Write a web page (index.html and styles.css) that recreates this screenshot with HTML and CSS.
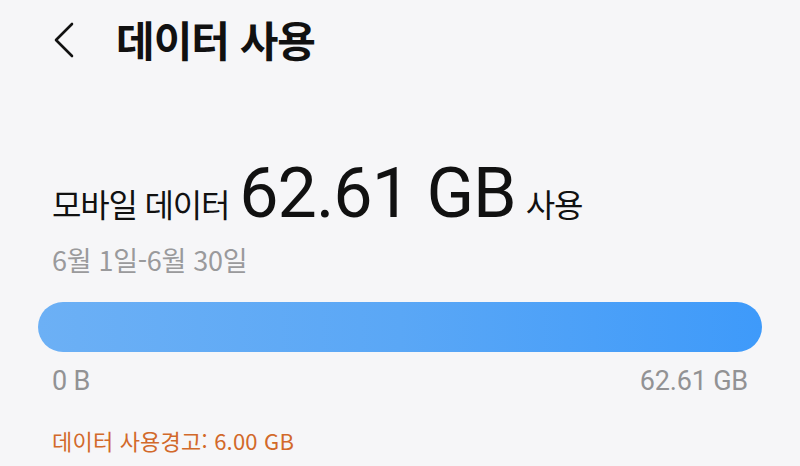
FILE: index.html
```html
<!DOCTYPE html>
<html lang="ko">
<head>
<meta charset="utf-8">
<link rel="stylesheet" href="styles.css">
</head>
<body>
<div class="page">
  <header class="topbar">
    <svg class="back" width="24" height="36" viewBox="0 0 24 36" aria-hidden="true">
      <path d="M20 2 L4 18 L20 34" fill="none" stroke="#111" stroke-width="2.6" stroke-linecap="round" stroke-linejoin="round"/>
    </svg>
    <h1 class="title">데이터 사용</h1>
  </header>
  <section class="summary">
    <div class="usage">
      <span class="label">모바일 데이터</span>
      <span class="amount">62.61 GB</span>
      <span class="label small">사용</span>
    </div>
    <div class="period">6월 1일-6월 30일</div>
  </section>
  <div class="bar"></div>
  <div class="scale">
    <span>0 B</span>
    <span>62.61 GB</span>
  </div>
  <div class="warning">데이터 사용경고: 6.00 GB</div>
</div>
</body>
</html>
```
FILE: styles.css
```css
html, body {
  margin: 0;
  padding: 0;
  background: #f6f6f8;
}
body {
  font-family: "Noto Sans CJK KR", Roboto, sans-serif;
  color: #111;
  width: 800px;
  height: 466px;
  overflow: hidden;
}
.page {
  display: flex;
  flex-direction: column;
}
.topbar {
  display: flex;
  align-items: center;
  height: 78px;
  padding-left: 52px;
  gap: 40px;
}
.back {
  display: block;
  margin-top: 2px;
}
.title {
  margin: 0;
  font-size: 42px;
  font-weight: 700;
  letter-spacing: -1px;
  line-height: 1;
}
.summary {
  padding-left: 52px;
  margin-top: 80px;
}
.usage {
  display: flex;
  align-items: baseline;
  gap: 10px;
  line-height: 1;
}
.label {
  font-size: 32px;
  letter-spacing: -1.2px;
}
.amount {
  font-family: Roboto, "Noto Sans CJK KR", sans-serif;
  font-size: 70px;
  letter-spacing: -1px;
}
.period {
  margin-top: 18px;
  font-size: 27px;
  color: #9a9a9c;
  letter-spacing: -0.3px;
  line-height: 1;
}
.bar {
  margin: 29px 38px 0 38px;
  height: 50px;
  border-radius: 25px;
  background: linear-gradient(90deg, #6cb0f5 0%, #5aa7f6 50%, #3e9afa 100%);
}
.scale {
  display: flex;
  justify-content: space-between;
  padding: 0 52px;
  margin-top: 16px;
  font-family: Roboto, sans-serif;
  font-size: 27px;
  color: #929294;
  letter-spacing: -0.2px;
  line-height: 1;
}
.warning {
  margin-top: 34px;
  padding-left: 52px;
  font-size: 22px;
  color: #d2692a;
  letter-spacing: 0.2px;
  line-height: 1;
}
```
